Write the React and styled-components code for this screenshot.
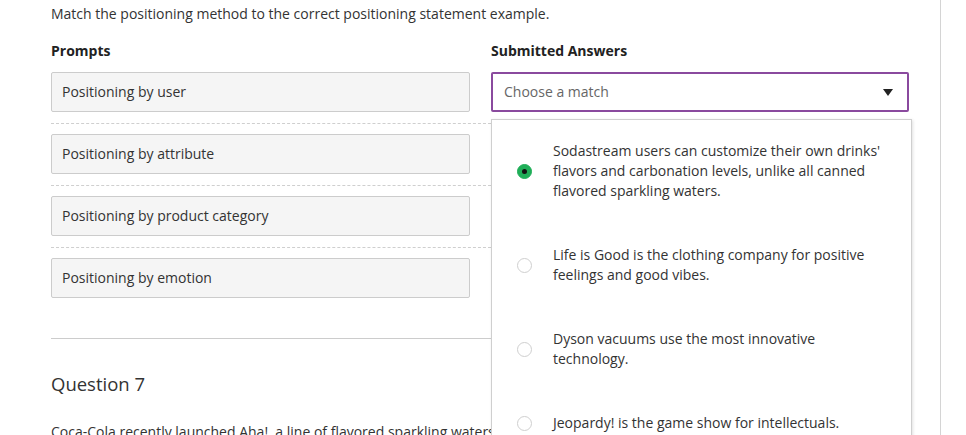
import React from "react";
import styled, { createGlobalStyle } from "styled-components";

const Global = createGlobalStyle`
  html, body { margin: 0; padding: 0; background: #fff; overflow: hidden; }
  body { font-family: "Open Sans", "Liberation Sans", sans-serif; color: #333; }
  * { box-sizing: border-box; }
`;

const Panel = styled.div`
  width: 941px;
  height: 435px;
  border-right: 1px solid #d4d4d4;
  padding: 4px 31px 0 51px;
`;

const Instruction = styled.p`
  margin: 0;
  font-size: 14px;
  line-height: 20px;
  color: #333;
`;

const MatchGrid = styled.div`
  display: grid;
  grid-template-columns: 440px 418px;
  margin-top: 17px;
`;

const ColHeader = styled.div`
  font-size: 14px;
  line-height: 20px;
  font-weight: 700;
  color: #222;
  margin-bottom: 11px;
`;

const PromptCell = styled.div`
  padding-bottom: ${(p) => (p.$last ? 0 : 11)}px;
  margin-bottom: ${(p) => (p.$last ? 0 : 10)}px;
  border-bottom: ${(p) => (p.$last ? "none" : "1px dashed #cfcfcf")};
`;

const PromptBox = styled.div`
  width: 419px;
  height: 40px;
  display: flex;
  align-items: center;
  padding: 0 10px 2px;
  background: #f5f5f5;
  border: 1px solid #cccccc;
  border-radius: 2px;
  font-size: 14px;
  color: #333;
`;

const AnswerCell = styled.div`
  position: relative;
`;

const Select = styled.div`
  width: 418px;
  height: 40px;
  display: flex;
  align-items: center;
  justify-content: space-between;
  padding: 0 14px 2px 11px;
  background: #fff;
  border: ${(p) => (p.$open ? "2px solid #8a4a9e" : "1px solid #ccc")};
  border-radius: 2px;
  font-size: 14px;
  color: #666;
`;

const Arrow = styled.span`
  width: 0;
  height: 0;
  margin-top: 2px;
  border-left: 5.5px solid transparent;
  border-right: 5.5px solid transparent;
  border-top: 7px solid #222;
`;

const Menu = styled.div`
  position: absolute;
  z-index: 5;
  top: 47px;
  left: 0;
  width: 421px;
  height: 340px;
  background: #fff;
  border: 1px solid #cfcfcf;
  box-shadow: 1px 1px 3px rgba(0, 0, 0, 0.12);
  overflow: hidden;
`;

const Option = styled.div`
  display: flex;
  align-items: center;
  padding: 21px 20px 23px 25px;
`;

const Radio = styled.span`
  flex: none;
  width: 15px;
  height: 15px;
  border-radius: 50%;
  margin-right: 21px;
  display: flex;
  align-items: center;
  justify-content: center;
  background: ${(p) => (p.$checked ? "#1fae58" : "#fff")};
  border: 1px solid ${(p) => (p.$checked ? "#1fae58" : "#cfcfcf")};
  &::after {
    content: "";
    display: ${(p) => (p.$checked ? "block" : "none")};
    width: 5px;
    height: 5px;
    border-radius: 50%;
    background: #111;
  }
`;

const OptionText = styled.div`
  font-size: 14px;
  line-height: 20px;
  color: #333;
  max-width: 336px;
`;

const Divider = styled.hr`
  margin: 40px 0 0;
  border: none;
  border-top: 1px solid #ccc;
  width: 858px;
`;

const QuestionTitle = styled.h2`
  margin: 32px 0 0;
  font-size: 18.5px;
  line-height: 26px;
  font-weight: 400;
  color: #333;
`;

const QuestionText = styled.p`
  margin: 25px 0 0;
  font-size: 14px;
  line-height: 20px;
  color: #333;
  white-space: nowrap;
  width: 440px;
  overflow: hidden;
`;

const prompts = [
  "Positioning by user",
  "Positioning by attribute",
  "Positioning by product category",
  "Positioning by emotion",
];

const options = [
  {
    text: "Sodastream users can customize their own drinks' flavors and carbonation levels, unlike all canned flavored sparkling waters.",
    checked: true,
  },
  { text: "Life is Good is the clothing company for positive feelings and good vibes." },
  { text: "Dyson vacuums use the most innovative technology." },
  { text: "Jeopardy! is the game show for intellectuals." },
];

export default function App() {
  return (
    <>
      <Global />
      <Panel>
        <Instruction>
          Match the positioning method to the correct positioning statement example.
        </Instruction>
        <MatchGrid>
          <ColHeader>Prompts</ColHeader>
          <ColHeader>Submitted Answers</ColHeader>
          {prompts.map((p, i) => (
            <React.Fragment key={p}>
              <PromptCell $last={i === prompts.length - 1}>
                <PromptBox>{p}</PromptBox>
              </PromptCell>
              <AnswerCell>
                <Select $open={i === 0}>
                  <span>Choose a match</span>
                  <Arrow />
                </Select>
                {i === 0 && (
                  <Menu>
                    {options.map((o) => (
                      <Option key={o.text}>
                        <Radio $checked={o.checked} />
                        <OptionText>{o.text}</OptionText>
                      </Option>
                    ))}
                  </Menu>
                )}
              </AnswerCell>
            </React.Fragment>
          ))}
        </MatchGrid>
        <Divider />
        <QuestionTitle>Question 7</QuestionTitle>
        <QuestionText>
          Coca-Cola recently launched Aha!, a line of flavored sparkling waters that
        </QuestionText>
      </Panel>
    </>
  );
}
